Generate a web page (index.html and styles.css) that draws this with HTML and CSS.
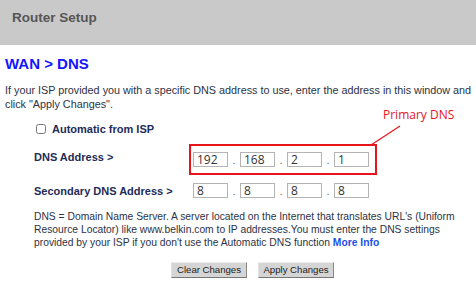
FILE: index.html
```html
<!DOCTYPE html>
<html lang="en">
<head>
  <meta charset="UTF-8">
  <title>Router Setup</title>
  <link rel="stylesheet" href="styles.css">
</head>
<body>
  <div class="topbar">Router Setup</div>
  <div class="content">
    <h2 class="title">WAN &gt; DNS</h2>
    <p class="intro">If your ISP provided you with a specific DNS address to use, enter the address in this window and<br>click "Apply Changes".</p>

    <div class="form">
      <label class="auto"><input type="checkbox"> Automatic from ISP</label>

      <div class="lbl">DNS Address &gt;</div>
      <div class="ip primary">
        <input type="text" value="192"><span class="dot">.</span><input type="text" value="168"><span class="dot">.</span><input type="text" value="2"><span class="dot">.</span><input type="text" value="1">
      </div>

      <div class="lbl">Secondary DNS Address &gt;</div>
      <div class="ip">
        <input type="text" value="8"><span class="dot">.</span><input type="text" value="8"><span class="dot">.</span><input type="text" value="8"><span class="dot">.</span><input type="text" value="8">
      </div>
    </div>

    <p class="note">DNS = Domain Name Server. A server located on the Internet that translates URL's (Uniform<br>Resource Locator) like www.belkin.com to IP addresses.You must enter the DNS settings<br>provided by your ISP if you don't use the Automatic DNS function <a href="#">More Info</a></p>

    <div class="actions">
      <button>Clear Changes</button>
      <button>Apply Changes</button>
    </div>

    <div class="callout">
      <span>Primary DNS</span>
      <svg width="40" height="24" viewBox="0 0 40 24"><line x1="32" y1="2" x2="3" y2="21" stroke="#e8141c" stroke-width="1.2"/></svg>
    </div>
  </div>
</body>
</html>
```

FILE: styles.css
```css
body { margin: 0; background: #fff; font-family: "Liberation Sans", Arial, sans-serif; color: #2b3245; }

.topbar { height: 45px; box-sizing: border-box; padding: 10px 12px 0; background: #c9c9c9; color: #565656; font-size: 13.5px; font-weight: bold; line-height: 16px; }

.content { position: relative; padding: 0 5px; }

.title { margin: 10px 0 0; font-size: 15px; line-height: 18px; color: #1414ff; }

.intro { margin: 10px 0 0; font-size: 10.8px; line-height: 14px; white-space: nowrap; }

.form { display: grid; grid-template-columns: 155px auto; align-items: center; margin: 8px 0 0 29px; }
.auto { grid-column: 1 / 3; display: flex; align-items: center; gap: 6px; height: 20px; font-size: 11px; font-weight: bold; color: #1e2c58; }
.auto input { width: 10px; height: 10px; margin: 0 0 0 2px; }
.lbl { font-size: 11px; font-weight: bold; color: #1e2c58; }

.ip { display: flex; align-items: center; width: 188px; height: 31px; box-sizing: border-box; padding: 0 5px 0 2px; border: 2px solid transparent; }
.primary { margin-top: 5px; border-color: #e8141c; }
.ip input { width: 35px; height: 15px; box-sizing: border-box; padding: 0 3px; border: 1px solid #b4b4b4; font-family: "Open Sans", sans-serif; font-size: 12px; color: #333; }
.dot { width: 12px; text-align: center; font-size: 11px; color: #666; }

.note { margin: 4px 0 0 29px; font-size: 10.3px; line-height: 13px; white-space: nowrap; }
.note a { color: #1b4fe8; font-weight: bold; text-decoration: none; }

.actions { display: flex; justify-content: center; gap: 11px; margin: 13px 0 0 29px; }
.actions button { width: 76px; height: 16px; padding: 0; border: 1px solid; border-color: #eee #888 #777 #e2e2e2; background: #d5d5d5; font-family: "Liberation Sans", Arial, sans-serif; font-size: 9.6px; color: #222; line-height: 14px; }

.callout { position: absolute; left: 368px; top: 53px; width: 90px; }
.callout span { display: block; padding-left: 15px; font-family: "Open Sans", sans-serif; font-size: 12px; line-height: 14px; color: #e8141c; }
.callout svg { display: block; margin-top: 2px; }
```
